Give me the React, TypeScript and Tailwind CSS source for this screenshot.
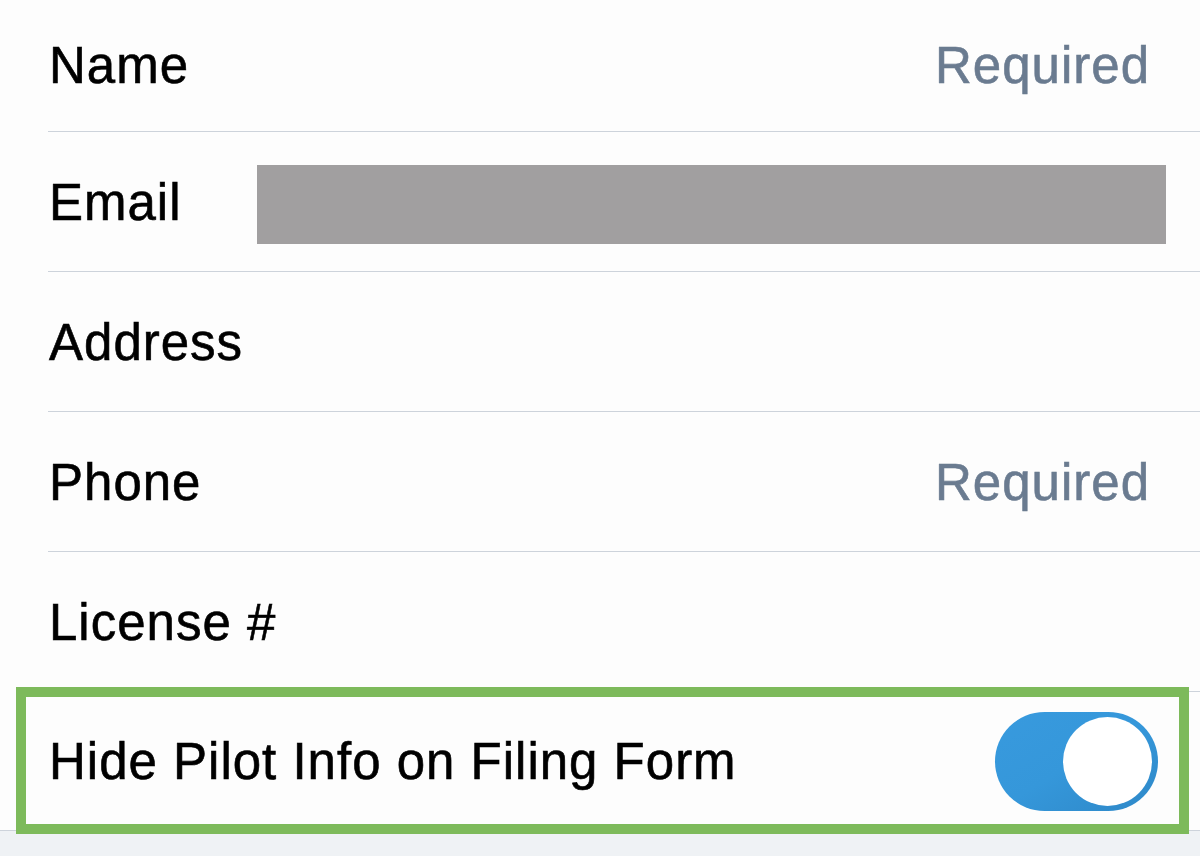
import { useState } from "react"

const font = { fontFamily: '"Liberation Sans", Arial, sans-serif' }

const text = "text-[51px] tracking-[1px] [-webkit-text-stroke:0.6px_currentColor]"

function Row({
  label,
  value,
  first,
}: {
  label: string
  value?: string
  first?: boolean
}) {
  return (
    <div className="pl-12">
      <div
        className={`flex items-center border-b border-[#cdd3db] pr-[50px] ${
          first ? "h-[132px] pt-[2px]" : "h-[140px] pt-[3px]"
        }`}
      >
        <span className={`ml-[1px] text-black ${text}`}>{label}</span>
        <div className="flex flex-1 justify-end">
          {value && <span className={`text-[#6a7b90] ${text}`}>{value}</span>}
        </div>
      </div>
    </div>
  )
}

function Toggle({ on, onChange }: { on: boolean; onChange: () => void }) {
  return (
    <button
      onClick={onChange}
      className="relative h-[99px] w-[163px] rounded-full bg-gradient-to-br from-[#389ade] via-[#3597da] to-[#2e88c8]"
    >
      <span
        className={`absolute top-[5px] h-[89px] w-[89px] rounded-full bg-white ${
          on ? "right-[6px]" : "left-[6px]"
        }`}
      />
    </button>
  )
}

export default function App() {
  const [hidden, setHidden] = useState(true)

  return (
    <div className="flex h-[856px] w-[1200px] flex-col overflow-hidden bg-[#fdfdfd]" style={font}>
      <Row label="Name" value="Required" first />
      <div className="pl-12">
        <div className="flex h-[140px] items-center border-b border-[#cdd3db] pt-[3px]">
          <span className={`ml-[1px] w-[208px] text-black ${text}`}>Email</span>
          <div className="mt-[3px] h-[79px] w-[909px] bg-[#a19fa0]" />
        </div>
      </div>
      <Row label="Address" />
      <Row label="Phone" value="Required" />
      <Row label="License #" />
      <div className="relative flex h-[139px] items-center justify-between border-b border-[#cdd3db] pl-12 pr-[42px]">
        <span className={`ml-[1px] mt-[3px] text-black ${text}`}>Hide Pilot Info on Filing Form</span>
        <Toggle on={hidden} onChange={() => setHidden(!hidden)} />
        <div className="pointer-events-none absolute left-4 top-[-5px] h-[147px] w-[1173px] border-[10px] border-[#7dba5b]" />
      </div>
      <div className="flex-1 bg-[#eff2f5]" />
    </div>
  )
}
